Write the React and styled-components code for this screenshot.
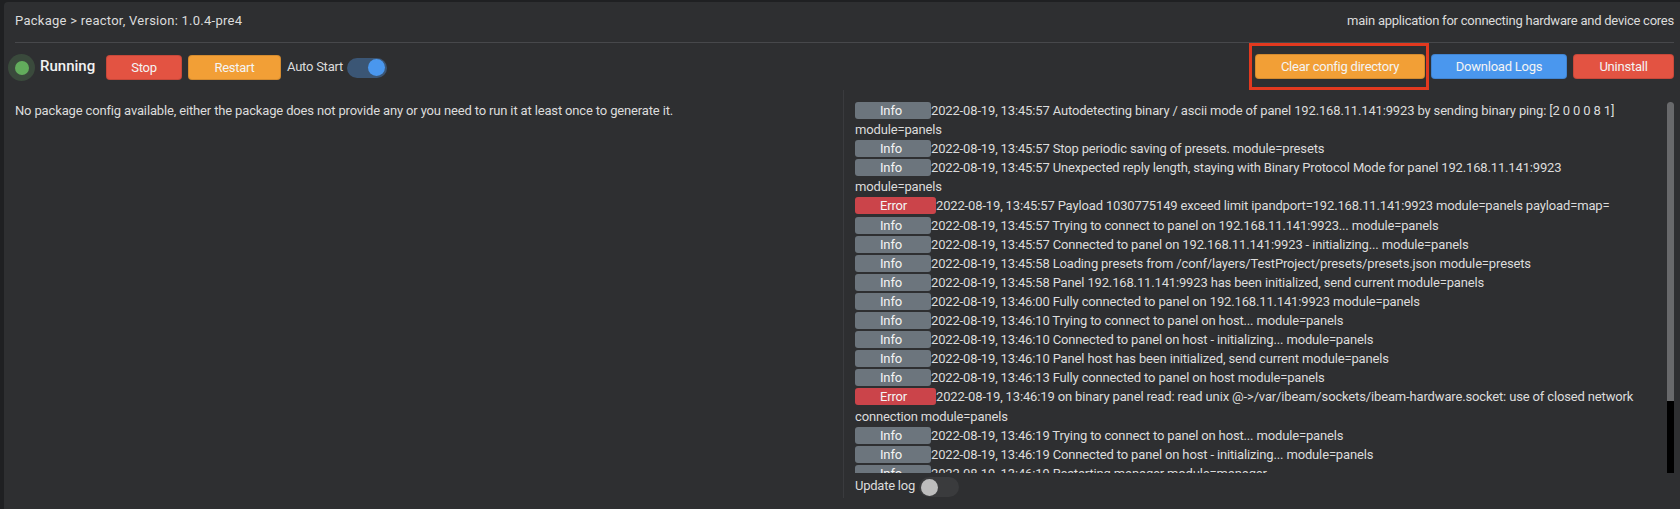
import React from "react";
import styled, { createGlobalStyle } from "styled-components";

const GlobalStyle = createGlobalStyle`
  html, body {
    margin: 0;
    padding: 0;
    background: #1f2022;
    overflow: hidden;
  }
  * { box-sizing: border-box; }
`;

const Panel = styled.div`
  margin: 2px 0 0 4px;
  height: 507px;
  background: #2e2f31;
  border-radius: 4px 0 0 0;
  padding: 0 6px 0 11px;
  color: #dcdcdc;
  font-family: Roboto, "Liberation Sans", sans-serif;
  font-size: 13px;
  letter-spacing: -0.24px;
  overflow: hidden;
`;

const Header = styled.div`
  height: 41px;
  display: flex;
  justify-content: space-between;
  align-items: center;
  border-bottom: 1px solid #47484b;
  padding-bottom: 3px;
`;

const Title = styled.span`
  letter-spacing: 0.26px;
`;

const Toolbar = styled.div`
  height: 47px;
  display: flex;
  justify-content: space-between;
  align-items: center;
  margin-left: -7px;
`;

const Group = styled.div`
  display: flex;
  align-items: center;
  padding-top: ${(p) => p.$drop || 0}px;
`;

const Led = styled.span`
  width: 27px;
  height: 27px;
  border-radius: 50%;
  background: #3a4a3c;
  display: flex;
  align-items: center;
  justify-content: center;
  &::after {
    content: "";
    width: 14px;
    height: 14px;
    border-radius: 50%;
    background: #62ad5c;
  }
`;

const Status = styled.span`
  width: 66px;
  margin: 0 0 4px 5px;
  font-size: 15px;
  font-weight: 500;
  letter-spacing: 0;
  color: #f2f2f2;
`;

const Button = styled.button`
  width: ${(p) => p.$w}px;
  height: 25px;
  margin-left: ${(p) => p.$gap || 0}px;
  border: 1px solid rgba(0, 0, 0, 0.12);
  border-radius: 4px;
  background: ${(p) => p.$bg};
  color: #f4f4f4;
  font: inherit;
  letter-spacing: inherit;
  padding: 0;
`;

const Highlight = styled.div`
  width: 180px;
  height: 47px;
  margin-right: 2px;
  padding-left: 3px;
  border: 3px solid #e2391f;
  display: flex;
  align-items: center;
`;

const ToggleLabel = styled.span`
  margin-left: ${(p) => p.$gap || 0}px;
  margin-right: 4px;
  margin-bottom: 3px;
`;

const Toggle = styled.span`
  display: inline-flex;
  align-items: center;
  width: 40px;
  height: 20px;
  padding: 0 2px;
  border-radius: 10px;
  background: ${(p) => (p.$on ? "#3b5675" : "#3a3b3d")};
  justify-content: ${(p) => (p.$on ? "flex-end" : "flex-start")};
  &::after {
    content: "";
    width: 17px;
    height: 17px;
    border-radius: 50%;
    background: ${(p) => (p.$on ? "#4a97ee" : "#bdbdbd")};
  }
`;

const Columns = styled.div`
  display: grid;
  grid-template-columns: 828px 1fr;
`;

const ConfigNote = styled.div`
  padding-top: 11px;
  line-height: 19px;
  letter-spacing: -0.15px;
`;

const LogColumn = styled.div`
  border-left: 1px solid #3a3b3e;
  padding: 11px 0 0 11px;
  height: 408px;
`;

const LogArea = styled.div`
  display: flex;
  height: 372px;
`;

const LogBody = styled.div`
  flex: 1;
  overflow: hidden;
  padding-right: 26px;
  line-height: 19.1px;
  letter-spacing: -0.15px;
`;

const LogLine = styled.div`
  min-height: 19px;
`;

const Badge = styled.span`
  display: inline-block;
  width: ${(p) => (p.$error ? 81 : 76)}px;
  height: 17px;
  margin-top: 1px;
  padding-right: 4px;
  line-height: 17px;
  border-radius: 3px;
  vertical-align: top;
  background: ${(p) => (p.$error ? "#cb444a" : "#6c757d")};
  color: #f4f4f4;
  text-align: center;
`;

const ScrollTrack = styled.div`
  width: 7px;
  height: 371px;
  margin-top: 1px;
  background: #000;
  border-radius: 3px 3px 0 0;
  flex-shrink: 0;
`;

const ScrollThumb = styled.div`
  height: 299px;
  background: #68696b;
  border-radius: 3px 3px 0 0;
`;

const LogFooter = styled.div`
  display: flex;
  align-items: center;
  height: 28px;
`;

const logs = [
  ["Info", "2022-08-19, 13:45:57 Autodetecting binary / ascii mode of panel 192.168.11.141:9923 by sending binary ping: [2 0 0 0 8 1] module=panels"],
  ["Info", "2022-08-19, 13:45:57 Stop periodic saving of presets. module=presets"],
  ["Info", "2022-08-19, 13:45:57 Unexpected reply length, staying with Binary Protocol Mode for panel 192.168.11.141:9923 module=panels"],
  ["Error", "2022-08-19, 13:45:57 Payload 1030775149 exceed limit ipandport=192.168.11.141:9923 module=panels payload=map="],
  ["Info", "2022-08-19, 13:45:57 Trying to connect to panel on 192.168.11.141:9923... module=panels"],
  ["Info", "2022-08-19, 13:45:57 Connected to panel on 192.168.11.141:9923 - initializing... module=panels"],
  ["Info", "2022-08-19, 13:45:58 Loading presets from /conf/layers/TestProject/presets/presets.json module=presets"],
  ["Info", "2022-08-19, 13:45:58 Panel 192.168.11.141:9923 has been initialized, send current module=panels"],
  ["Info", "2022-08-19, 13:46:00 Fully connected to panel on 192.168.11.141:9923 module=panels"],
  ["Info", "2022-08-19, 13:46:10 Trying to connect to panel on host... module=panels"],
  ["Info", "2022-08-19, 13:46:10 Connected to panel on host - initializing... module=panels"],
  ["Info", "2022-08-19, 13:46:10 Panel host has been initialized, send current module=panels"],
  ["Info", "2022-08-19, 13:46:13 Fully connected to panel on host module=panels"],
  ["Error", "2022-08-19, 13:46:19 on binary panel read: read unix @->/var/ibeam/sockets/ibeam-hardware.socket: use of closed network connection module=panels"],
  ["Info", "2022-08-19, 13:46:19 Trying to connect to panel on host... module=panels"],
  ["Info", "2022-08-19, 13:46:19 Connected to panel on host - initializing... module=panels"],
  ["Info", "2022-08-19, 13:46:19 Restarting manager module=manager"],
];

export default function App() {
  return (
    <>
      <GlobalStyle />
      <Panel>
        <Header>
          <Title>Package &gt; reactor, Version: 1.0.4-pre4</Title>
          <span>main application for connecting hardware and device cores</span>
        </Header>
        <Toolbar>
          <Group $drop={2}>
            <Led />
            <Status>Running</Status>
            <Button $w={76} $bg="#e35342">Stop</Button>
            <Button $w={93} $gap={6} $bg="#f29f36">Restart</Button>
            <ToggleLabel $gap={6}>Auto Start</ToggleLabel>
            <Toggle $on />
          </Group>
          <Group>
            <Highlight>
              <Button $w={170} $bg="#f29f36">Clear config directory</Button>
            </Highlight>
            <Button $w={136} $bg="#4a97ee">Download Logs</Button>
            <Button $w={101} $gap={6} $bg="#e35342">Uninstall</Button>
          </Group>
        </Toolbar>
        <Columns>
          <ConfigNote>
            No package config available, either the package does not provide any or you need to run it at least once to generate it.
          </ConfigNote>
          <LogColumn>
            <LogArea>
              <LogBody>
                {logs.map(([level, text], i) => (
                  <LogLine key={i}>
                    <Badge $error={level === "Error"}>{level}</Badge>
                    {text}
                  </LogLine>
                ))}
              </LogBody>
              <ScrollTrack>
                <ScrollThumb />
              </ScrollTrack>
            </LogArea>
            <LogFooter>
              <ToggleLabel>Update log</ToggleLabel>
              <Toggle />
            </LogFooter>
          </LogColumn>
        </Columns>
      </Panel>
    </>
  );
}
